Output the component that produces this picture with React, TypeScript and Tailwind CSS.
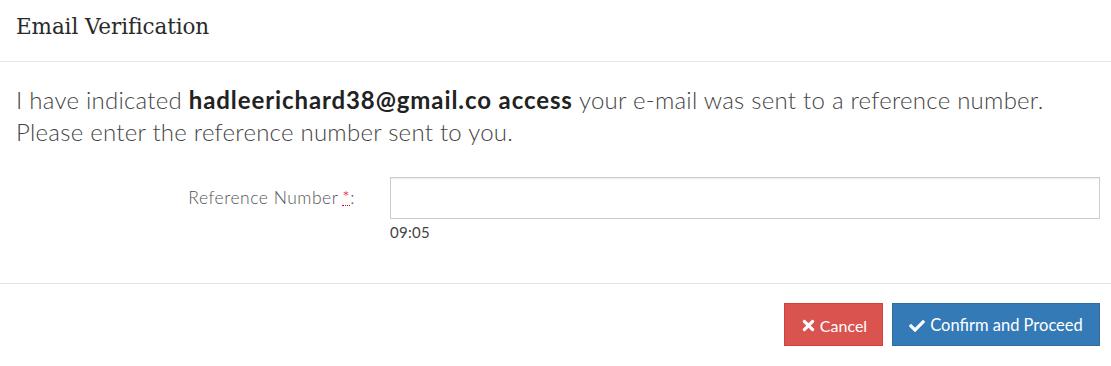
import { FaTimes, FaCheck } from "react-icons/fa";

export default function App() {
  return (
    <div className="w-[1111px] h-[366px] bg-white font-['Lato',sans-serif] text-[#333]">
      <div className="h-[62px] border-b border-[#e5e5e5] pl-4 pt-[13px]">
        <h4 className="font-['DejaVu_Serif',serif] text-[21.5px] leading-[28px] text-[#2a2a2a] tracking-[-0.1px]">
          Email Verification
        </h4>
      </div>

      <div className="pl-4 pr-[11px] pt-[22px] h-[222px] border-b border-[#e5e5e5]">
        <p className="text-[24px] leading-[32px] font-light text-[#444] tracking-[0.25px]">
          I have indicated{" "}
          <strong className="font-bold text-[#222] tracking-[0.9px]">hadleerichard38@gmail.co access</strong>{" "}
          your e-mail was sent to a reference number.
          <br />
          Please enter the reference number sent to you.
        </p>

        <div className="flex mt-[29px]">
          <label className="flex-none w-[374px] pr-[35px] h-[42px] flex items-center justify-end text-[17.5px] font-light text-[#555] tracking-[0.5px]">
            Reference Number{" "}
            <abbr className="ml-1 text-[#e3001b] no-underline border-b border-dotted border-[#e3001b] leading-[14px]">
              *
            </abbr>
            :
          </label>
          <div className="flex-1">
            <input
              type="text"
              className="w-full h-[42px] border border-[#ccc] shadow-[inset_0_1px_1px_rgba(0,0,0,0.075)] outline-none px-3"
            />
            <div className="text-[15px] leading-[20px] mt-[3px] text-[#444] font-normal tracking-[0.3px]">09:05</div>
          </div>
        </div>
      </div>

      <div className="flex justify-end gap-[9px] pr-[11px] pt-[19px]">
        <button className="w-[99px] h-[43px] pt-[2px] bg-[#d9534f] border border-[#d43f3a] text-white text-[16px] flex items-center justify-center gap-[3px]">
          <FaTimes className="text-[17px]" />
          Cancel
        </button>
        <button className="w-[208px] h-[43px] pt-[2px] bg-[#337ab7] border border-[#2e6da4] text-white text-[16.5px] flex items-center justify-center gap-[5px]">
          <FaCheck className="text-[16px]" />
          Confirm and Proceed
        </button>
      </div>
    </div>
  );
}
